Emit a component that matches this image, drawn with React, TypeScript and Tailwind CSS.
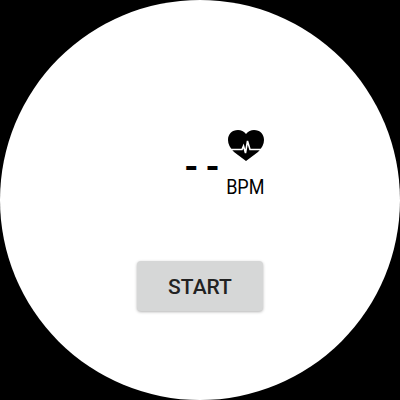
import React from 'react';

const HeartPulse = () => (
    <svg width="36" height="31" viewBox="0 0 36 31" className="block">
        <path d="M18 31 L6 22 C2 18 0 14 0 10 C0 4 4 0 10 0 C13 0 16 1.5 18 4 C20 1.5 23 0 26 0 C32 0 36 4 36 10 C36 14 34 18 30 22 Z" fill="#000" />
        <path d="M0 19.5 H14 L15.5 16 L17.5 23 L19.5 11 L22 19.5 H36" fill="none" stroke="#fff" strokeWidth="1.6" />
    </svg>
);

const App: React.FC = () => {
    return (
        <div className="w-[400px] h-[400px] bg-black overflow-hidden font-['Roboto',sans-serif]">
            <div className="w-[400px] h-[400px] rounded-full bg-white flex flex-col items-center">
                {/* READING */}
                <div className="flex items-start h-[70px] mt-[130px] ml-[50px]">
                    <span className="text-[36px] leading-none font-bold text-black tracking-[-1px] mt-[19px] mr-[7px]">- -</span>
                    <div className="flex flex-col items-center w-[40px]">
                        <HeartPulse />
                        <span className="text-[20px] leading-none text-black mt-[16px] scale-x-90">BPM</span>
                    </div>
                </div>

                {/* START BUTTON */}
                <button className="w-[126px] h-[50px] mt-[61px] pt-[3px] bg-[#d6d7d7] rounded-[4px] shadow-[0_1px_3px_rgba(0,0,0,0.3)] text-[21px] font-medium text-[#222] flex items-center justify-center">
                    START
                </button>
            </div>
        </div>
    );
};

export default App;
